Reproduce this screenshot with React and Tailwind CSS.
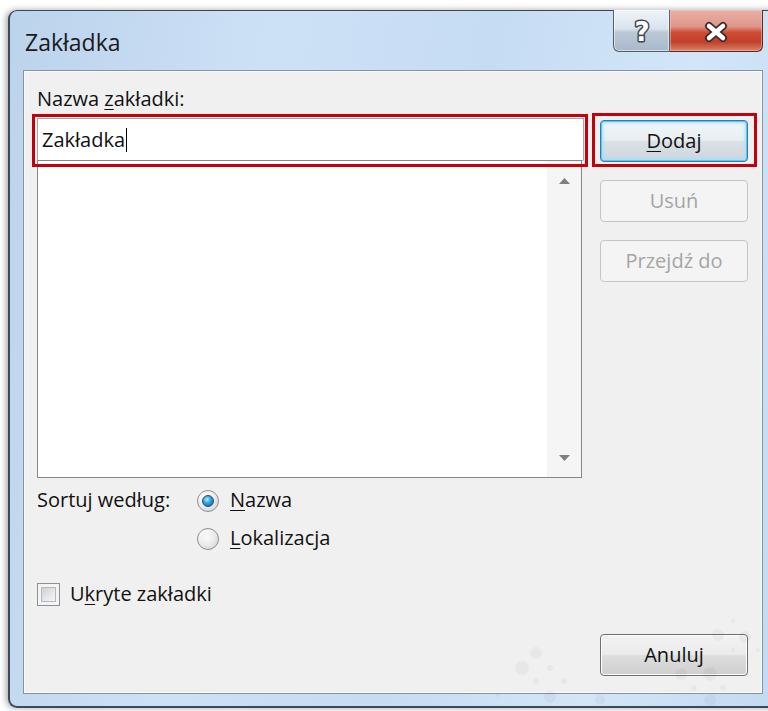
import React from 'react';

// Win7-style push button: default (focused), normal and disabled looks
function PushButton({ children, kind = 'normal', className = '' }) {
  const base = 'flex h-[42px] w-[148px] items-center justify-center rounded-[4px] border';
  const looks = {
    focused:
      'border-[#3a78a8] bg-[linear-gradient(to_bottom,#f1f6f9_0%,#e8eef2_48%,#d9e1e6_52%,#cdd6dc_100%)] shadow-[inset_0_0_0_1px_#52cbf7,inset_0_0_3px_2px_#9fe2fb]',
    normal:
      'border-[#707070] bg-[linear-gradient(to_bottom,#f3f3f3_0%,#ebebeb_48%,#dddddd_52%,#cfcfcf_100%)] shadow-[inset_0_0_0_1px_#fcfcfc]',
    disabled: 'border-[#c3c6c9] bg-[#f4f4f4] text-[#a5a5a5]',
  };
  return <div className={`${base} ${looks[kind]} ${className}`}>{children}</div>;
}

function Key({ children }) {
  return <span className="underline decoration-1 underline-offset-[3px]">{children}</span>;
}

function Radio({ checked, children }) {
  return (
    <div className="flex items-start gap-[11px]">
      <div className="mt-[2px] flex h-[22px] w-[22px] items-center justify-center rounded-full border border-[#8f8f8f] bg-[radial-gradient(circle_at_35%_30%,#ffffff_0%,#f0f0f0_40%,#cfcfcf_100%)]">
        {checked ? (
          <div className="h-[12px] w-[12px] rounded-full border border-[#1a4f7f] bg-[radial-gradient(circle_at_40%_35%,#bdeeff_0%,#35a4e6_40%,#0a5596_100%)]" />
        ) : (
          <div className="h-[14px] w-[14px] rounded-full bg-[radial-gradient(circle_at_40%_35%,#fbfbfb_0%,#e2e2e2_100%)]" />
        )}
      </div>
      <span>{children}</span>
    </div>
  );
}

function ScrollArrow({ down }) {
  return (
    <svg width="11" height="6" viewBox="0 0 11 6">
      <polygon points={down ? '0,0 11,0 5.5,6' : '0,6 11,6 5.5,0'} fill="#7d7f82" />
    </svg>
  );
}

function CaptionButtons() {
  return (
    <div className="-mt-px flex">
      <div className="flex h-[42px] w-[57px] items-center justify-center rounded-bl-[6px] border border-t-0 border-[#56606c] bg-[linear-gradient(to_bottom,#eef3f8_0%,#dbe4ed_45%,#bac8d6_55%,#a9b9ca_100%)] shadow-[inset_0_0_0_1px_rgba(255,255,255,0.5)]">
        <svg width="24" height="28" viewBox="0 0 24 28" className="mt-[2px]">
          <text
            x="12"
            y="23"
            textAnchor="middle"
            fontFamily="DejaVu Sans, sans-serif"
            fontWeight="bold"
            fontSize="26"
            fill="#ffffff"
            stroke="#3d4550"
            strokeWidth="3"
            paintOrder="stroke"
            strokeLinejoin="round"
          >
            ?
          </text>
        </svg>
      </div>
      <div className="flex h-[42px] w-[93px] items-center justify-center rounded-br-[6px] border border-t-0 border-l-0 border-[#5b2a23] bg-[linear-gradient(to_bottom,#e9b0a5_0%,#e0968a_40%,#cf4b34_55%,#c1402a_78%,#d9836b_100%)] shadow-[inset_0_0_0_1px_rgba(255,210,200,0.45)]">
        <svg width="26" height="22" viewBox="0 0 26 22" className="mt-[2px]">
          <g strokeLinecap="round">
            <path d="M6 5 L20 17 M20 5 L6 17" stroke="#3a2c2a" strokeWidth="8" />
            <path d="M6 5 L20 17 M20 5 L6 17" stroke="#ffffff" strokeWidth="4.5" />
          </g>
        </svg>
      </div>
    </div>
  );
}

// faint glass specks showing through the frame near the bottom right
const specks = [
  [536, 653, 6], [522, 668, 7], [550, 668, 3], [536, 681, 3], [564, 681, 3], [550, 697, 6],
  [733, 621, 2], [718, 635, 6], [745, 637, 6], [733, 650, 2], [758, 650, 2], [681, 674, 6],
  [710, 674, 7], [694, 688, 3], [723, 688, 3], [710, 700, 6], [498, 695, 2], [600, 700, 5],
];

export default function App() {
  return (
    <div className="relative h-[711px] w-[768px] overflow-hidden bg-white pl-[8px] pt-[10px] font-['Open_Sans',sans-serif] text-[20px] leading-[24px] text-[#111111]">
      <div className="flex h-[698px] w-[770px] flex-col rounded-l-[9px] border-b-2 border-l-2 border-t border-[#3e4956] bg-[linear-gradient(100deg,#bcd3ec_0%,#cde1f6_30%,#c6dcf3_55%,#d3e6f8_78%,#c3daf2_100%)] pl-[13px] pr-[15px] shadow-[-2px_0_6px_rgba(0,0,0,0.35)]">
        {/* caption */}
        <div className="flex h-[59px] items-start justify-between">
          <span className="ml-[2px] mt-[20px] text-[23px] leading-[23px] text-[#1a1a1a]">Zakładka</span>
          <CaptionButtons />
        </div>

        {/* client area */}
        <div className="relative flex h-[624px] border border-[#8593a3] bg-[#f0f0f0] pb-[17px] pl-[13px] pt-[16px] shadow-[inset_0_0_0_1px_#f7f9fb]">
          <div className="flex w-[547px] flex-col">
            <span>
              Nazwa <Key>z</Key>akładki:
            </span>
            <div className="mt-[7px] flex h-[43px] items-center border border-[#a3a8b0] border-b-[#c9ced6] bg-white px-[4px]">
              <span>Zakładka</span>
              <span className="ml-[1px] h-[24px] w-px bg-black" />
            </div>
            <div className="-mt-px mr-[2px] flex h-[318px] border border-[#828790] bg-white">
              <div className="flex-1" />
              <div className="flex w-[34px] flex-col items-center justify-between bg-[#f5f5f5] pb-[16px] pt-[17px]">
                <ScrollArrow />
                <ScrollArrow down />
              </div>
            </div>

            <div className="mt-[10px] flex">
              <span className="w-[160px]">Sortuj według:</span>
              <div className="flex flex-col gap-[14px]">
                <Radio checked>
                  <Key>N</Key>azwa
                </Radio>
                <Radio>
                  <Key>L</Key>okalizacja
                </Radio>
              </div>
            </div>

            <div className="mt-[32px] flex items-center gap-[10px]">
              <div className="flex h-[23px] w-[23px] items-center justify-center border border-[#8e8f8f] bg-[#f4f4f4]">
                <div className="h-[15px] w-[15px] border border-[#b6bac0] bg-[linear-gradient(135deg,#cdd1d6_0%,#e7e9eb_60%,#f4f4f4_100%)]" />
              </div>
              <span>
                U<Key>k</Key>ryte zakładki
              </span>
            </div>
          </div>

          <div className="ml-[16px] flex w-[148px] flex-col pt-[33px]">
            <PushButton kind="focused">
              <span>
                <Key>D</Key>odaj
              </span>
            </PushButton>
            <PushButton kind="disabled" className="mt-[18px]">
              Usuń
            </PushButton>
            <PushButton kind="disabled" className="mt-[18px]">
              Przejdź do
            </PushButton>
            <PushButton className="mt-auto">Anuluj</PushButton>
          </div>

          {/* red highlight frames */}
          <div className="pointer-events-none absolute left-[8px] top-[43px] h-[53px] w-[556px] border-[3px] border-[#c4000b]" />
          <div className="pointer-events-none absolute left-[568px] top-[42px] h-[54px] w-[165px] border-[3px] border-[#c4000b]" />
        </div>
      </div>

      <svg className="pointer-events-none absolute left-0 top-0" width="768" height="711">
        {specks.map(([cx, cy, r], i) => (
          <circle key={i} cx={cx} cy={cy} r={r} fill="#000" opacity="0.035" />
        ))}
      </svg>
    </div>
  );
}
